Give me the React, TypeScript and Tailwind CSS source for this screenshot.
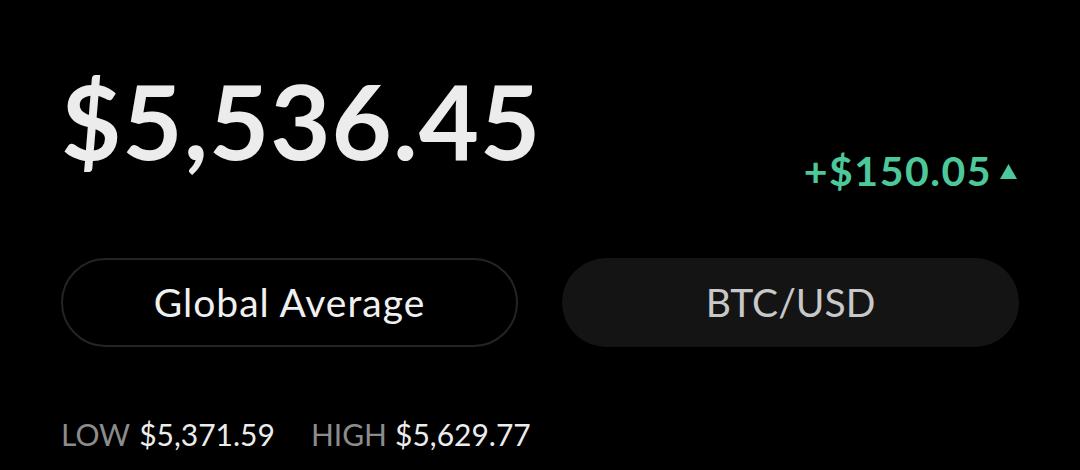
import React from 'react';

const App: React.FC = () => {
  return (
    <div
      className="w-[1080px] h-[470px] bg-black px-[61px] overflow-hidden"
      style={{ fontFamily: 'Lato, "Noto Sans", sans-serif' }}
    >
      {/* price row */}
      <div className="flex items-end justify-between pt-[68px] pr-[2px]">
        <div className="text-[104px] leading-none font-bold text-[#ececec] tracking-[1px]">
          $5,536.45
        </div>
        <div className="flex items-center gap-[8px] mb-[-19px] text-[#4cc89a]">
          <span className="text-[41px] leading-none font-bold tracking-[1.5px]">+$150.05</span>
          <svg width="17" height="15" viewBox="0 0 17 15" className="mt-[2px]">
            <polygon points="8.5,0 17,15 0,15" fill="#4cc89a" />
          </svg>
        </div>
      </div>

      {/* buttons */}
      <div className="grid grid-cols-2 gap-[44px] mt-[86px]">
        <button className="h-[89px] rounded-full border-2 border-[#242424] text-[39px] tracking-[1px] text-[#f0f0f0]">
          Global Average
        </button>
        <button className="h-[89px] rounded-full bg-[#141414] text-[39px] text-[#c8c8c8]">
          BTC/USD
        </button>
      </div>

      {/* low / high */}
      <div className="flex items-baseline mt-[72px] text-[30px] leading-none">
        <span className="text-[#8c8c8c]">LOW</span>
        <span className="ml-[9px] text-[#ececec]">$5,371.59</span>
        <span className="ml-[36px] text-[#8c8c8c]">HIGH</span>
        <span className="ml-[8px] text-[#ececec]">$5,629.77</span>
      </div>
    </div>
  );
};

export default App;
